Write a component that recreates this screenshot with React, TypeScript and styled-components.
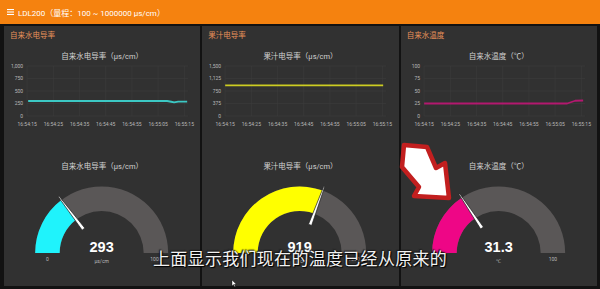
import styled, { createGlobalStyle } from "styled-components";

const GlobalStyle = createGlobalStyle`
  html, body {
    margin: 0;
    padding: 0;
    background: #121212;
  }
  body {
    font-family: "Roboto", "Noto Sans CJK SC", sans-serif;
  }
`;

const Page = styled.div`
  position: relative;
  width: 600px;
  height: 289px;
  overflow: hidden;
  background: #121212;
  display: flex;
  flex-direction: column;
`;

const Header = styled.header`
  height: 24px;
  flex: none;
  background: #f5820f;
  display: flex;
  align-items: center;
  gap: 4px;
  padding-left: 7px;
  color: #fff;
  font-size: 8px;
`;

const Board = styled.main`
  flex: 1;
  display: grid;
  grid-template-columns: repeat(3, 1fr);
  gap: 2px;
  padding: 2px 3px 3px 4px;
`;

const Panel = styled.section`
  background: #313131;
  display: flex;
  flex-direction: column;
  min-width: 0;
`;

const GroupTitle = styled.div`
  height: 20px;
  line-height: 20px;
  padding-left: 6px;
  font-size: 7.5px;
  color: #e8915a;
`;

const WidgetTitle = styled.div<{ $gap: number }>`
  margin-top: ${(p) => p.$gap}px;
  height: 14px;
  line-height: 14px;
  text-align: center;
  font-size: 7.5px;
  color: #d2d2d2;
`;

const ChartSvg = styled.svg`
  display: block;
  width: 100%;
  height: 66px;
`;

const GaugeSvg = styled.svg`
  display: block;
  width: 100%;
  height: 92px;
`;

const Tick = styled.text`
  font-family: "Roboto", sans-serif;
  font-size: 5px;
  fill: #b8b8b8;
`;

const Reading = styled.text`
  font-family: "Liberation Sans", "Roboto", sans-serif;
  font-weight: 700;
  font-size: 14.5px;
  fill: #ffffff;
`;

const Subtitle = styled.div`
  position: absolute;
  left: 153px;
  top: 248px;
  font-family: "Noto Sans CJK SC", sans-serif;
  font-size: 17px;
  letter-spacing: 0.3px;
  line-height: 20px;
  color: #f2f2f2;
  text-shadow: 0 0 2px #000, 1px 1px 1px #000, -1px -1px 1px #222;
  white-space: nowrap;
`;

const Overlay = styled.svg<{ $x: number; $y: number }>`
  position: absolute;
  left: ${(p) => p.$x}px;
  top: ${(p) => p.$y}px;
  overflow: visible;
`;

const TIMES = ["16:54:15", "16:54:25", "16:54:35", "16:54:45", "16:54:55", "16:55:05", "16:55:15"];
const TOP = 2;
const BOTTOM = 52;
const LEFT = 23;
const STEP = 26.2;

type ChartProps = {
  max: number;
  ticks: string[];
  color: string;
  points: [number, number][];
};

function LineChart({ max, ticks, color, points }: ChartProps) {
  const y = (v: number) => BOTTOM - (v / max) * (BOTTOM - TOP);
  const rows = ticks.length - 1;
  return (
    <ChartSvg viewBox="0 0 196 66">
      {ticks.map((t, i) => {
        const yy = BOTTOM - (i / rows) * (BOTTOM - TOP);
        return (
          <g key={t}>
            <line x1={LEFT} x2={184} y1={yy} y2={yy} stroke="#3c3c3c" strokeWidth={0.6} />
            <Tick x={19} y={yy + 1.8} textAnchor="end">
              {t}
            </Tick>
          </g>
        );
      })}
      {TIMES.map((t, i) => {
        const xx = LEFT + i * STEP;
        return (
          <g key={t}>
            <line x1={xx} x2={xx} y1={TOP} y2={BOTTOM} stroke="#3c3c3c" strokeWidth={0.6} />
            <Tick x={xx} y={61.5} textAnchor="middle">
              {t}
            </Tick>
          </g>
        );
      })}
      <polyline
        points={points.map(([px, v]) => `${px},${y(v)}`).join(" ")}
        fill="none"
        stroke={color}
        strokeWidth={1.8}
        strokeLinejoin="round"
      />
    </ChartSvg>
  );
}

type GaugeProps = {
  value: number;
  max: number;
  color: string;
  label: string;
  unit: string;
  maxLabel: string;
};

function Gauge({ value, max, color, label, unit, maxLabel }: GaugeProps) {
  const cx = 97.5;
  const cy = 79;
  const R = 66.5;
  const r = 42;
  const a = Math.PI * (1 - value / max);
  const pt = (rad: number, ang: number) => [cx + rad * Math.cos(ang), cy - rad * Math.sin(ang)];
  const [ox, oy] = pt(R, a);
  const [ix, iy] = pt(r, a);
  const track = `M ${cx - R} ${cy} A ${R} ${R} 0 0 1 ${cx + R} ${cy} L ${cx + r} ${cy} A ${r} ${r} 0 0 0 ${cx - r} ${cy} Z`;
  const fill = `M ${cx - R} ${cy} A ${R} ${R} 0 0 1 ${ox} ${oy} L ${ix} ${iy} A ${r} ${r} 0 0 0 ${cx - r} ${cy} Z`;
  const nx = Math.sin(a);
  const ny = Math.cos(a);
  const [ax, ay] = pt(30, a);
  const [bx, by] = pt(71, a);
  const needle = [
    [ax + nx * 1.7, ay + ny * 1.7],
    [bx + nx * 0.5, by + ny * 0.5],
    [bx - nx * 0.5, by - ny * 0.5],
    [ax - nx * 1.7, ay - ny * 1.7],
  ]
    .map((p) => p.join(","))
    .join(" ");
  return (
    <GaugeSvg viewBox="0 0 196 92">
      <path d={track} fill="#5a5757" />
      <path d={fill} fill={color} />
      <polygon points={needle} fill="#ffffff" stroke="#1a1a1a" strokeWidth={0.7} strokeLinejoin="round" />
      <Reading x={cx} y={78} textAnchor="middle">
        {label}
      </Reading>
      <Tick x={cx} y={89} textAnchor="middle">
        {unit}
      </Tick>
      <Tick x={cx - (R + r) / 2} y={87} textAnchor="middle">
        0
      </Tick>
      <Tick x={cx + (R + r) / 2} y={87} textAnchor="middle">
        {maxLabel}
      </Tick>
    </GaugeSvg>
  );
}

const flat = (v: number, from = 24, to = 183): [number, number][] => [
  [from, v],
  [to, v],
];

const panels = [
  {
    group: "自来水电导率",
    title: "自来水电导率（μs/cm）",
    max: 1000,
    ticks: ["0", "250", "500", "750", "1,000"],
    line: "#3cc8c4",
    points: [
      [24, 300],
      [163, 300],
      [167, 285],
      [170, 272],
      [174, 288],
      [183, 288],
    ] as [number, number][],
    gauge: { value: 293, label: "293", color: "#1ff3fc", unit: "μs/cm", maxLabel: "1000" },
  },
  {
    group: "果汁电导率",
    title: "果汁电导率（μs/cm）",
    max: 1500,
    ticks: ["0", "375", "750", "1,125", "1,500"],
    line: "#cccc22",
    points: flat(919, 23, 181),
    gauge: { value: 919, label: "919", color: "#ffff00", unit: "μs/cm", maxLabel: "1500" },
  },
  {
    group: "自来水温度",
    title: "自来水温度（℃）",
    max: 100,
    ticks: ["0", "25", "50", "75", "100"],
    line: "#b3186f",
    points: [
      [23, 25],
      [166, 25],
      [174, 30.5],
      [182, 31],
    ] as [number, number][],
    gauge: { value: 31.3, label: "31.3", color: "#ee0686", unit: "℃", maxLabel: "100" },
  },
];

export default function App() {
  return (
    <Page>
      <GlobalStyle />
      <Header>
        <svg width="7" height="6" viewBox="0 0 7 6">
          <rect x="0" y="0" width="7" height="1.1" fill="#fff" />
          <rect x="0" y="2.45" width="7" height="1.1" fill="#fff" />
          <rect x="0" y="4.9" width="7" height="1.1" fill="#fff" />
        </svg>
        <span>LDL200（量程：100 ~ 1000000 μs/cm）</span>
      </Header>
      <Board>
        {panels.map((p) => (
          <Panel key={p.group}>
            <GroupTitle>{p.group}</GroupTitle>
            <WidgetTitle $gap={4}>{p.title}</WidgetTitle>
            <LineChart max={p.max} ticks={p.ticks} color={p.line} points={p.points} />
            <WidgetTitle $gap={30}>{p.title}</WidgetTitle>
            <Gauge
              value={p.gauge.value}
              max={p.max}
              color={p.gauge.color}
              label={p.gauge.label}
              unit={p.gauge.unit}
              maxLabel={p.gauge.maxLabel}
            />
          </Panel>
        ))}
      </Board>

      {/* red pointer arrow drawn over the temperature gauge */}
      <Overlay $x={396} $y={140} width={62} height={66} viewBox="396 140 62 66">
        <polygon
          points="404,145 427,147 436,168 445,163 449,198 414,196 419,187 402,167"
          fill="#ffffff"
          stroke="#c21f1f"
          strokeWidth={4.5}
          strokeLinejoin="round"
        />
      </Overlay>

      <Subtitle>上面显示我们现在的温度已经从原来的</Subtitle>

      {/* mouse cursor */}
      <Overlay $x={232} $y={280} width={5} height={7} viewBox="0 0 5 7">
        <path d="M0 0 L0 6 L1.5 4.6 L2.6 6.8 L3.4 6.4 L2.4 4.3 L4.3 4.3 Z" fill="#fff" stroke="#000" strokeWidth={0.4} />
      </Overlay>
    </Page>
  );
}
